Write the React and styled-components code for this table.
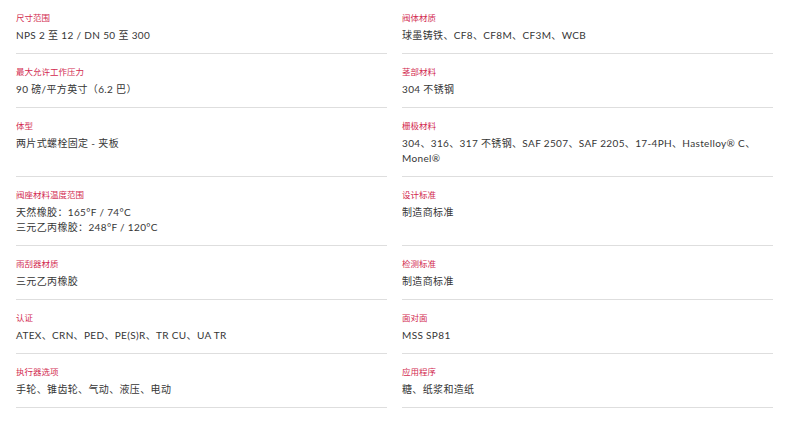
import React from "react";
import styled, { createGlobalStyle } from "styled-components";

const Global = createGlobalStyle`
  html, body { margin: 0; padding: 0; background: #fff; }
  body { font-family: "Lato", "Noto Sans CJK SC", sans-serif; }
`;

const Grid = styled.div`
  display: grid;
  grid-template-columns: 371px 371px;
  column-gap: 15px;
  padding: 0 16px;
`;

const Cell = styled.div`
  display: flex;
  flex-direction: column;
  gap: 4px;
  padding: 12px 0 10px;
  border-bottom: 1px solid #dedede;
`;

const Label = styled.div`
  font-family: "Lato", "Noto Sans CJK SC", sans-serif;
  font-size: 8.5px;
  line-height: 12px;
  color: #d22a50;
`;

const Value = styled.div`
  font-family: "Lato", "Noto Sans CJK SC", sans-serif;
  font-size: 10px;
  line-height: 15px;
  color: #363636;
  letter-spacing: 0.35px;
`;

const specs = [
  ["尺寸范围", ["NPS 2 至 12 / DN 50 至 300"]],
  ["阀体材质", ["球墨铸铁、CF8、CF8M、CF3M、WCB"]],
  ["最大允许工作压力", ["90 磅/平方英寸（6.2 巴）"]],
  ["茎部材料", ["304 不锈钢"]],
  ["体型", ["两片式螺栓固定 - 夹板"]],
  ["栅极材料", ["304、316、317 不锈钢、SAF 2507、SAF 2205、17-4PH、Hastelloy® C、Monel®"]],
  ["阀座材料温度范围", ["天然橡胶：165°F / 74°C", "三元乙丙橡胶：248°F / 120°C"]],
  ["设计标准", ["制造商标准"]],
  ["雨刮器材质", ["三元乙丙橡胶"]],
  ["检测标准", ["制造商标准"]],
  ["认证", ["ATEX、CRN、PED、PE(S)R、TR CU、UA TR"]],
  ["面对面", ["MSS SP81"]],
  ["执行器选项", ["手轮、锥齿轮、气动、液压、电动"]],
  ["应用程序", ["糖、纸浆和造纸"]],
];

export default function App() {
  return (
    <>
      <Global />
      <Grid>
        {specs.map(([label, lines]) => (
          <Cell key={label}>
            <Label>{label}</Label>
            <Value>
              {lines.map((l, i) => (
                <div key={i}>{l}</div>
              ))}
            </Value>
          </Cell>
        ))}
      </Grid>
    </>
  );
}
